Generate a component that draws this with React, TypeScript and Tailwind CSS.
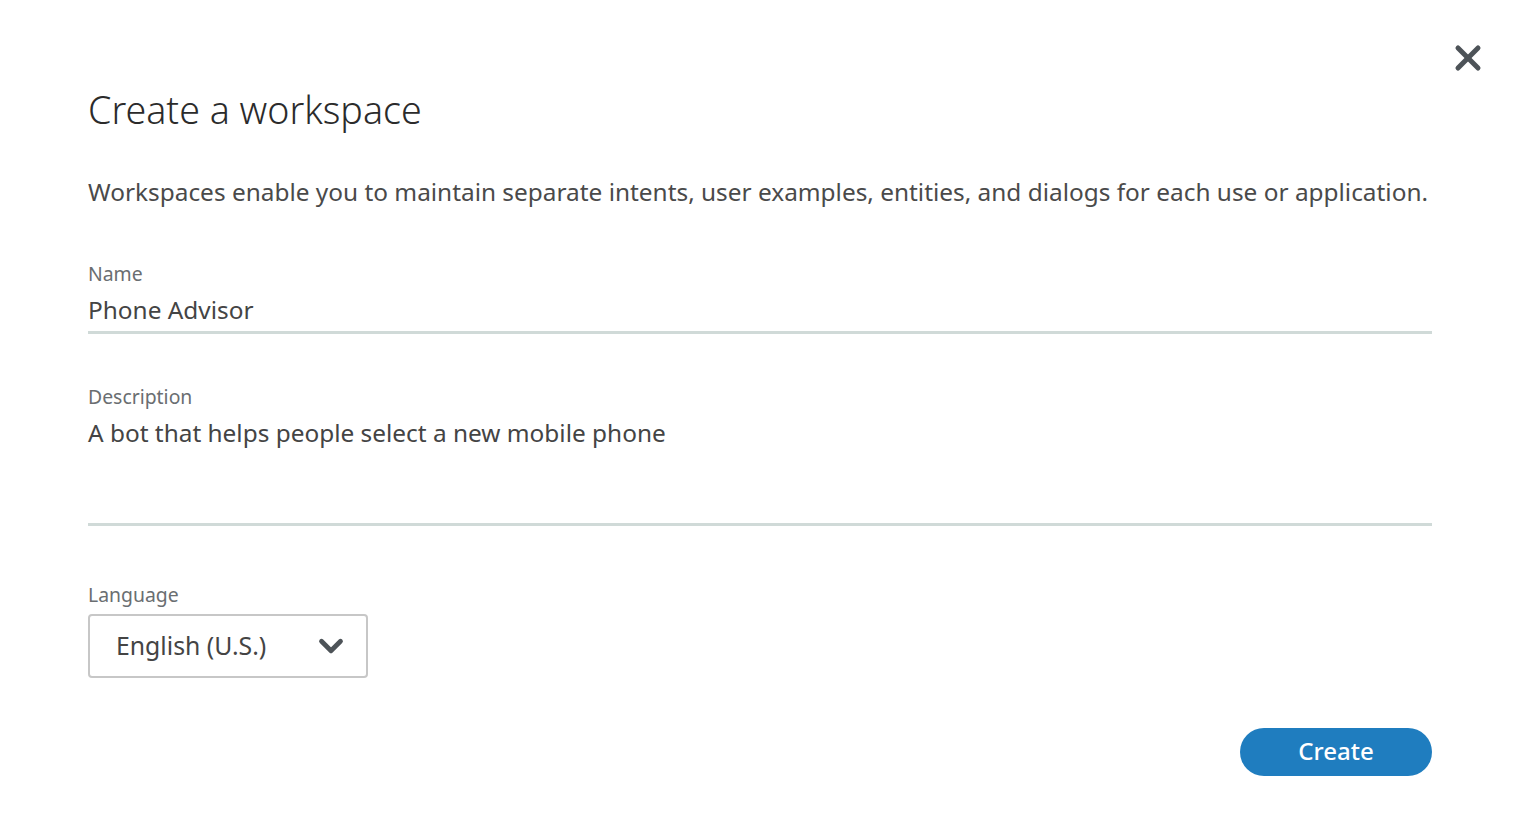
import { X, ChevronDown } from "lucide-react";

export default function App() {
  return (
    <div className="relative min-h-[816px] w-full bg-white font-['Noto_Sans',sans-serif] text-[#3d3d3d]">
      <button
        type="button"
        aria-label="Close"
        className="absolute right-[34px] top-[38px] text-[#4d5358]"
      >
        <X className="size-[40px]" strokeWidth={3} />
      </button>

      <div className="ml-[88px] mr-[90px] flex flex-col pt-[86px]">
        <h1 className="text-[37.6px] font-light leading-[48px] text-[#2b2b2b]">Create a workspace</h1>

        <p className="mt-[41px] text-[24.4px] leading-[34px] text-[#4a4a4a]">
          Workspaces enable you to maintain separate intents, user examples, entities, and dialogs for each use or
          application.
        </p>

        <label className="mt-[52px] text-[19.4px] leading-[26px] text-[#6a6e71]">Name</label>
        <div className="mt-[6px] border-b-[3px] border-[#d0dad8] pb-[4px] text-[24.4px] leading-[34px] text-[#444]">
          Phone Advisor
        </div>

        <label className="mt-[50px] text-[19.4px] leading-[26px] text-[#6a6e71]">Description</label>
        <div className="mt-[6px] h-[110px] border-b-[3px] border-[#d0dad8] text-[24.4px] leading-[34px] text-[#444]">
          A bot that helps people select a new mobile phone
        </div>

        <label className="mt-[56px] text-[19.4px] leading-[26px] text-[#6a6e71]">Language</label>
        <div className="mt-[6px] flex h-[64px] w-[280px] items-center justify-between rounded-[4px] border-2 border-[#c7c7c7] pl-[26px] pr-[16px]">
          <span className="pb-[3px] text-[24.8px] leading-[34px] text-[#444]">English (U.S.)</span>
          <ChevronDown className="size-[38px] text-[#4d5358]" strokeWidth={3} />
        </div>

        <div className="mt-[50px] flex justify-end">
          <button
            type="button"
            className="h-[48px] w-[192px] rounded-full bg-[#1f7dbf] pb-[3px] text-[24px] font-medium text-white"
          >
            Create
          </button>
        </div>
      </div>
    </div>
  );
}
